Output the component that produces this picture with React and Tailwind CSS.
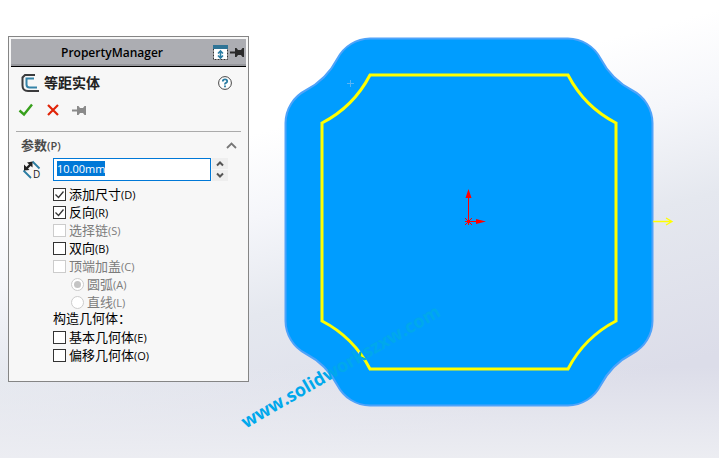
import React, { useEffect, useRef, useState } from 'react';

const options = [
  { id: 'dimensions', label: '添加尺寸', hotkey: 'D' },
  { id: 'reverse', label: '反向', hotkey: 'R' },
  { id: 'chain', label: '选择链', hotkey: 'S', disabled: true },
  { id: 'both', label: '双向', hotkey: 'B' },
  { id: 'cap', label: '顶端加盖', hotkey: 'C', disabled: true },
];

const geometry = [
  { id: 'base', label: '基本几何体', hotkey: 'E' },
  { id: 'offset', label: '偏移几何体', hotkey: 'O' },
];

function PinIcon() {
  return (
    <svg width="15" height="11" viewBox="0 0 15 11" fill="currentColor">
      <path d="M0 4.5h5V1h1.5L8 3h3l1.5-2H14v9h-1.5L11 8H8l-1.5 2H5V6.5H0z" />
    </svg>
  );
}

function OffsetIcon() {
  return (
    <svg width="20" height="20" viewBox="0 0 20 20" fill="none">
      <path d="M15 2H5L2.500 4.500v8q0 5.500 5.500 5.500h11" stroke="#3b3b3d" strokeWidth="2" />
      <path d="M14 5.500H6.500v6q0 3 3 3H17" stroke="#3583a8" strokeWidth="2" />
    </svg>
  );
}

function DistanceIcon() {
  return (
    <svg width="20" height="20" viewBox="0 0 20 20" fill="none">
      <path d="M10.5 1.5l7 7M1.5 10.5L9 18" stroke="#2b7da3" strokeWidth="1.8" />
      <path d="M4 9l5-5" stroke="#222" strokeWidth="2.4" />
      <path d="M10.5 1.5v6L5 2.5zM2 10.5v-6L7.500 10z" fill="#222" />
      <text x="11" y="18" fontSize="10" fill="#222" fontFamily="Open Sans, sans-serif">D</text>
    </svg>
  );
}

function Caption({ label, hotkey }) {
  return (
    <span>
      {label}
      <span className="text-[11px]">({hotkey})</span>
    </span>
  );
}

function CheckRow({ option, checked, onChange }) {
  return (
    <label className={`flex h-[18px] items-center gap-[3px] ${option.disabled ? 'text-[#7c7c7c]' : 'text-black'}`}>
      <span className="relative flex size-[13px]">
        <input
          type="checkbox"
          checked={checked}
          disabled={option.disabled}
          onChange={onChange}
          className="size-[13px] appearance-none border border-[#333] bg-white disabled:border-[#ccc]"
        />
        {checked && (
          <svg viewBox="0 0 13 13" fill="none" className="pointer-events-none absolute inset-0 size-[13px]">
            <path d="M2.5 6.5l3 3 5-6" stroke="#333" strokeWidth="1.3" />
          </svg>
        )}
      </span>
      <Caption label={option.label} hotkey={option.hotkey} />
    </label>
  );
}

function RadioRow({ label, hotkey, checked }) {
  return (
    <label className="ml-[18px] flex h-[18px] items-center gap-[3px] text-[#7c7c7c]">
      <span className="relative flex size-[13px]">
        <input
          type="radio"
          name="cap-type"
          defaultChecked={checked}
          disabled
          className="peer size-[13px] appearance-none rounded-full border border-[#ccc] bg-white"
        />
        <span className="pointer-events-none absolute inset-[3px] hidden rounded-full bg-[#c4c4c4] peer-checked:block" />
      </span>
      <Caption label={label} hotkey={hotkey} />
    </label>
  );
}

function PropertyPanel() {
  const [distance, setDistance] = useState('10.00mm');
  const [checks, setChecks] = useState({ dimensions: true, reverse: true });
  const inputRef = useRef(null);

  useEffect(() => {
    inputRef.current.focus();
    inputRef.current.select();
  }, []);

  const toggle = id => setChecks(c => ({ ...c, [id]: !c[id] }));
  const step = by => setDistance(d => `${Math.max(0, parseFloat(d) + by).toFixed(2)}mm`);

  return (
    <aside className="w-[241px] shrink-0 self-start border border-[#858585] bg-[#f7f7f7] text-[13px] leading-[18px]">
      {/* Title bar */}
      <header className="mx-0.5 mt-0.5 flex h-7 items-center border-b border-black bg-[#acadb2] pr-px shadow-[inset_0_-2px_0_#96979c]">
        <h1 className="flex-1 text-center text-[12px] font-semibold text-black">PropertyManager</h1>
        <button aria-label="展开" className="shrink-0">
          <svg width="15" height="15" viewBox="0 0 15 15" fill="none">
            <path d="M.5 3.5h14v11H.5z" fill="#fff" stroke="#333" strokeDasharray="2 1" />
            <path d="M0 0h15v4H0z" fill="#2f7496" />
            <path d="M7.5 6v7M5 8.500l2.500-2.500 2.500 2.500M5 10.500l2.500 2.500 2.500-2.500" stroke="#2b7da3" strokeWidth="1.6" />
          </svg>
        </button>
        <button aria-label="保持可见" className="ml-0.5 shrink-0 text-[#2a2a2a]">
          <PinIcon />
        </button>
      </header>

      <div className="flex h-[31px] items-center pr-4 pl-[11px]">
        <OffsetIcon />
        <h2 className="ml-1 flex-1 text-[14px] font-bold text-[#222]">等距实体</h2>
        <button aria-label="帮助">
          <svg width="14" height="14" viewBox="0 0 14 14" fill="none">
            <circle cx="7" cy="7" r="6.4" fill="#fff" stroke="#454545" />
            <path d="M4.800 5.500Q4.800 3.300 7 3.300T9.200 5.300Q9.200 6.300 8 6.900T7 8.500M7 9.500v1.700" stroke="#2b7da3" strokeWidth="1.8" />
          </svg>
        </button>
      </div>

      <div className="flex h-6 items-center gap-[13px] pl-[9px]">
        <button aria-label="确定">
          <svg width="16" height="14" viewBox="0 0 16 14" fill="none">
            <path d="M1.5 7.5l4.500 4L14 1.500" stroke="#37a01c" strokeWidth="2.4" />
          </svg>
        </button>
        <button aria-label="取消">
          <svg width="12" height="12" viewBox="0 0 12 12" fill="none">
            <path d="M1 1l10 10M11 1L1 11" stroke="#e02408" strokeWidth="2.2" />
          </svg>
        </button>
        <button aria-label="固定" className="text-[#8a8a8a]">
          <PinIcon />
        </button>
      </div>

      {/* Parameters */}
      <section className="mx-[7px] mt-[9px] border-t border-[#ababab] pt-[3px]">
        <button className="flex h-5 w-full items-center justify-between pr-1 pl-[5px] font-bold text-[#4a4a4a]">
          <span>
            参数<span className="text-[11px] font-semibold">(P)</span>
          </span>
          <svg width="11" height="7" viewBox="0 0 11 7" fill="none">
            <path d="M1 6l4.500-4.500L10 6" stroke="#777" strokeWidth="1.8" />
          </svg>
        </button>

        <div className="mt-[3px] flex items-start pl-1.5">
          <div className="mt-0.5 mr-[11px] shrink-0">
            <DistanceIcon />
          </div>
          <input
            ref={inputRef}
            aria-label="等距距离"
            value={distance}
            onChange={e => setDistance(e.target.value)}
            className="h-[23px] w-[158px] border border-[#0078d7] bg-white px-[3px] pb-0.5 text-[11px] text-black outline-none selection:bg-[#0078d7] selection:text-white"
          />
          <div className="ml-px flex flex-col gap-px">
            <button aria-label="增加" onClick={() => step(1)} className="flex h-[11px] w-4 items-center justify-center bg-[#eee]">
              <svg width="8" height="7" viewBox="0 0 8 7" fill="none">
                <path d="M1 5.500l3-3 3 3" stroke="#555" strokeWidth="2" />
              </svg>
            </button>
            <button aria-label="减少" onClick={() => step(-1)} className="flex h-[11px] w-4 items-center justify-center bg-[#eee]">
              <svg width="8" height="7" viewBox="0 0 8 7" fill="none">
                <path d="M1 1.500l3 3 3-3" stroke="#555" strokeWidth="2" />
              </svg>
            </button>
          </div>
        </div>

        <div className="mt-1 pb-[17px] pl-[37px]">
          {options.map(o => (
            <CheckRow key={o.id} option={o} checked={!!checks[o.id]} onChange={() => toggle(o.id)} />
          ))}
          <RadioRow label="圆弧" hotkey="A" checked />
          <RadioRow label="直线" hotkey="L" />
          <p className="h-[17px] leading-[14px]">构造几何体：</p>
          {geometry.map(o => (
            <CheckRow key={o.id} option={o} checked={!!checks[o.id]} onChange={() => toggle(o.id)} />
          ))}
        </div>
      </section>
    </aside>
  );
}

// Sketch profile, with the origin in the middle of the part
function Sketch() {
  return (
    <svg viewBox="-188 -188 400 376" fill="none" className="block w-full max-w-[400px]">
      <path
        d="M-99-183.500H99A37 37 0 0 1 131.500-163.500A75 75 0 0 0 163.500-131.500A37 37 0 0 1 183.500-99V99A37 37 0 0 1 163.500 131.500A75 75 0 0 0 131.500 163.500A37 37 0 0 1 99 183.500H-99A37 37 0 0 1-131.500 163.500A75 75 0 0 0-163.500 131.500A37 37 0 0 1-183.500 99V-99A37 37 0 0 1-163.500-131.500A75 75 0 0 0-131.500-163.500A37 37 0 0 1-99-183.500z"
        fill="#009dff"
        stroke="#4fa3fa"
        strokeWidth="2"
      />
      <path
        d="M-99-147H99A112 112 0 0 0 147-99V99A112 112 0 0 0 99 147H-99A112 112 0 0 0-147 99V-99A112 112 0 0 0-99-147z"
        stroke="#ffff00"
        strokeWidth="3"
      />
      <path d="M-122-138.500h7M-118.500-142v7" stroke="#58b4f5" />
      {/* Origin */}
      <path d="M-.5 0v-24M0-.5h9M-4-4l7 7M3-4l-7 7M-4-.5h7M-.5 3v-7" stroke="#ff0000" />
      <path d="M-3.500-24l3-9 3 9zM7-3l10 2.500L7 2z" fill="#ff0000" />
      {/* Offset direction */}
      <path d="M184-.5h19M197-4l6 3.500-6 3.500" stroke="#ffff00" strokeWidth="1.3" />
    </svg>
  );
}

export default function App() {
  return (
    <main className="relative flex min-h-screen overflow-hidden bg-[linear-gradient(180deg,transparent_80%,#ecedf2_100%),linear-gradient(165deg,#fff_31%,#f5f6fa_44%,#e5e8ef_59%,#dcdde9_84%)] pt-[36px] pl-2 font-['Open_Sans','Noto_Sans_CJK_SC',sans-serif]">
      <PropertyPanel />
      <div className="-mt-0.5 ml-8 min-w-0 flex-1">
        <Sketch />
      </div>
      <span className="pointer-events-none absolute top-[354px] left-[227px] -rotate-30 text-[18px] leading-6 font-bold whitespace-nowrap text-[#00a8ec] select-none">
        www.solidworkszxw.com
      </span>
    </main>
  );
}
